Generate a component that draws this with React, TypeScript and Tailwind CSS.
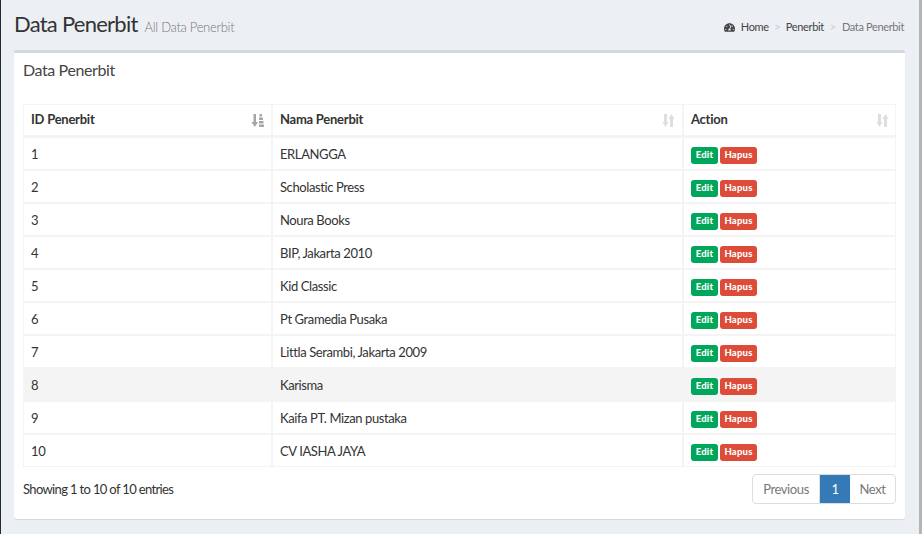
import { FaTachometerAlt } from "react-icons/fa";

const rows = [
	"ERLANGGA",
	"Scholastic Press",
	"Noura Books",
	"BIP, Jakarta 2010",
	"Kid Classic",
	"Pt Gramedia Pusaka",
	"Littla Serambi, Jakarta 2009",
	"Karisma",
	"Kaifa PT. Mizan pustaka",
	"CV IASHA JAYA",
];

const SortIcon: React.FC<{ active?: boolean }> = ({ active }) => {
	if (active) {
		return (
			<svg width="13" height="13" viewBox="0 0 13 13" className="text-[#a6a6a6]">
				<path d="M2.500 0h2.500v8h2l-3.250 5L0.500 8h2z" fill="currentColor" />
				<path d="M8.500 0h2.500v2.500H8.500zM8 3.500h4v2.500H8zM8 7h4.500v2.500H8zM8 10.500h5V13H8z" fill="currentColor" />
			</svg>
		);
	}
	return (
		<svg width="13" height="13" viewBox="0 0 13 13" className="text-[#dedede]">
			<path d="M2 0h3v8h1.500L3.500 13 0.500 8H2z" fill="currentColor" />
			<path d="M8 13h3V5h1.500l-3-5-3 5H8z" fill="currentColor" />
		</svg>
	);
};

const Th: React.FC<{ label: string; active?: boolean; last?: boolean }> = ({ label, active, last }) => (
	<div
		className={`mb-px flex h-[30px] items-center justify-between bg-white pl-[7px] text-[13px] font-bold tracking-[-0.25px] ${
			last ? "pr-[6px]" : "pr-[7px]"
		}`}
	>
		<span>{label}</span>
		<SortIcon active={active} />
	</div>
);

const Row: React.FC<{ id: number; name: string }> = ({ id, name }) => {
	const bg = id === 8 ? "bg-[#f4f4f4]" : "bg-white";
	return (
		<>
			<div className={`flex h-[31px] items-center pl-[7px] pt-[2px] ${bg}`}>{id}</div>
			<div className={`flex h-[31px] items-center pl-[7px] pt-[2px] ${bg}`}>{name}</div>
			<div className={`flex h-[31px] items-start gap-[2px] pl-[7px] pt-[9px] ${bg}`}>
				<span className="flex h-[17px] w-[27px] items-center justify-center rounded-[3px] bg-[#00a65a] text-[9.500px] font-black tracking-[0.2px] text-white">
					Edit
				</span>
				<span className="flex h-[17px] w-[37px] items-center justify-center rounded-[3px] bg-[#dd4b39] text-[9.500px] font-black tracking-[0.2px] text-white">
					Hapus
				</span>
			</div>
		</>
	);
};

export default function App() {
	return (
		<div className="flex h-[534px] w-[922px] overflow-hidden bg-[#ecf0f5] font-['Lato',sans-serif] text-[13px] tracking-[-0.4px] text-[#333]">
			<div className="w-px shrink-0 bg-[#222d32]" />
			<div className="flex min-w-0 flex-1 flex-col">
				<div className="flex h-[50px] shrink-0 items-center justify-between pl-[13px] pr-[15px]">
					<div className="flex items-baseline gap-[7px]">
						<span className="text-[22px] leading-none tracking-[-0.75px]">Data Penerbit</span>
						<span className="text-[13px] font-light tracking-[-0.3px] text-[#777]">All Data Penerbit</span>
					</div>
					<div className="mt-[4px] flex items-center text-[11px] tracking-[-0.35px] text-[#444]">
						<FaTachometerAlt className="mr-[6px] text-[11px] text-[#444]" />
						<span>Home</span>
						<span className="mx-[5.500px] text-[#ccc]">&gt;</span>
						<span>Penerbit</span>
						<span className="mx-[6px] text-[#ccc]">&gt;</span>
						<span className="text-[#777]">Data Penerbit</span>
					</div>
				</div>
				<div className="ml-[13px] mr-[14px] h-[469px] rounded-[3px] border-t-[3px] border-[#d2d6de] bg-white px-[9px] shadow-[0_1px_1px_rgba(0,0,0,0.1)]">
					<div className="h-[51px] pt-[7px] text-[16px] leading-[20px] tracking-[-0.4px] text-[#444]">
						Data Penerbit
					</div>
					<div className="grid w-[873px] grid-cols-[247px_409px_211px] gap-[2px] bg-[#f4f4f4] p-px">
						<Th label="ID Penerbit" active />
						<Th label="Nama Penerbit" />
						<Th label="Action" last />
						{rows.map((name, i) => (
							<Row key={name} id={i + 1} name={name} />
						))}
					</div>
					<div className="mt-[7px] flex h-[30px] items-center justify-between">
						<span className="pt-px tracking-[-0.65px]">Showing 1 to 10 of 10 entries</span>
						<div className="flex h-[30px] overflow-hidden rounded-[4px] border border-[#ddd] text-[#777]">
							<span className="flex w-[67px] items-center justify-center border-r border-[#ddd] pt-px">Previous</span>
							<span className="-my-px flex w-[30px] items-center justify-center bg-[#337ab7] pt-px text-white">1</span>
							<span className="flex w-[45px] items-center justify-center pt-px">Next</span>
						</div>
					</div>
				</div>
			</div>
			<div className="w-[3px] shrink-0 bg-[#b5b5b5]" />
		</div>
	);
}
